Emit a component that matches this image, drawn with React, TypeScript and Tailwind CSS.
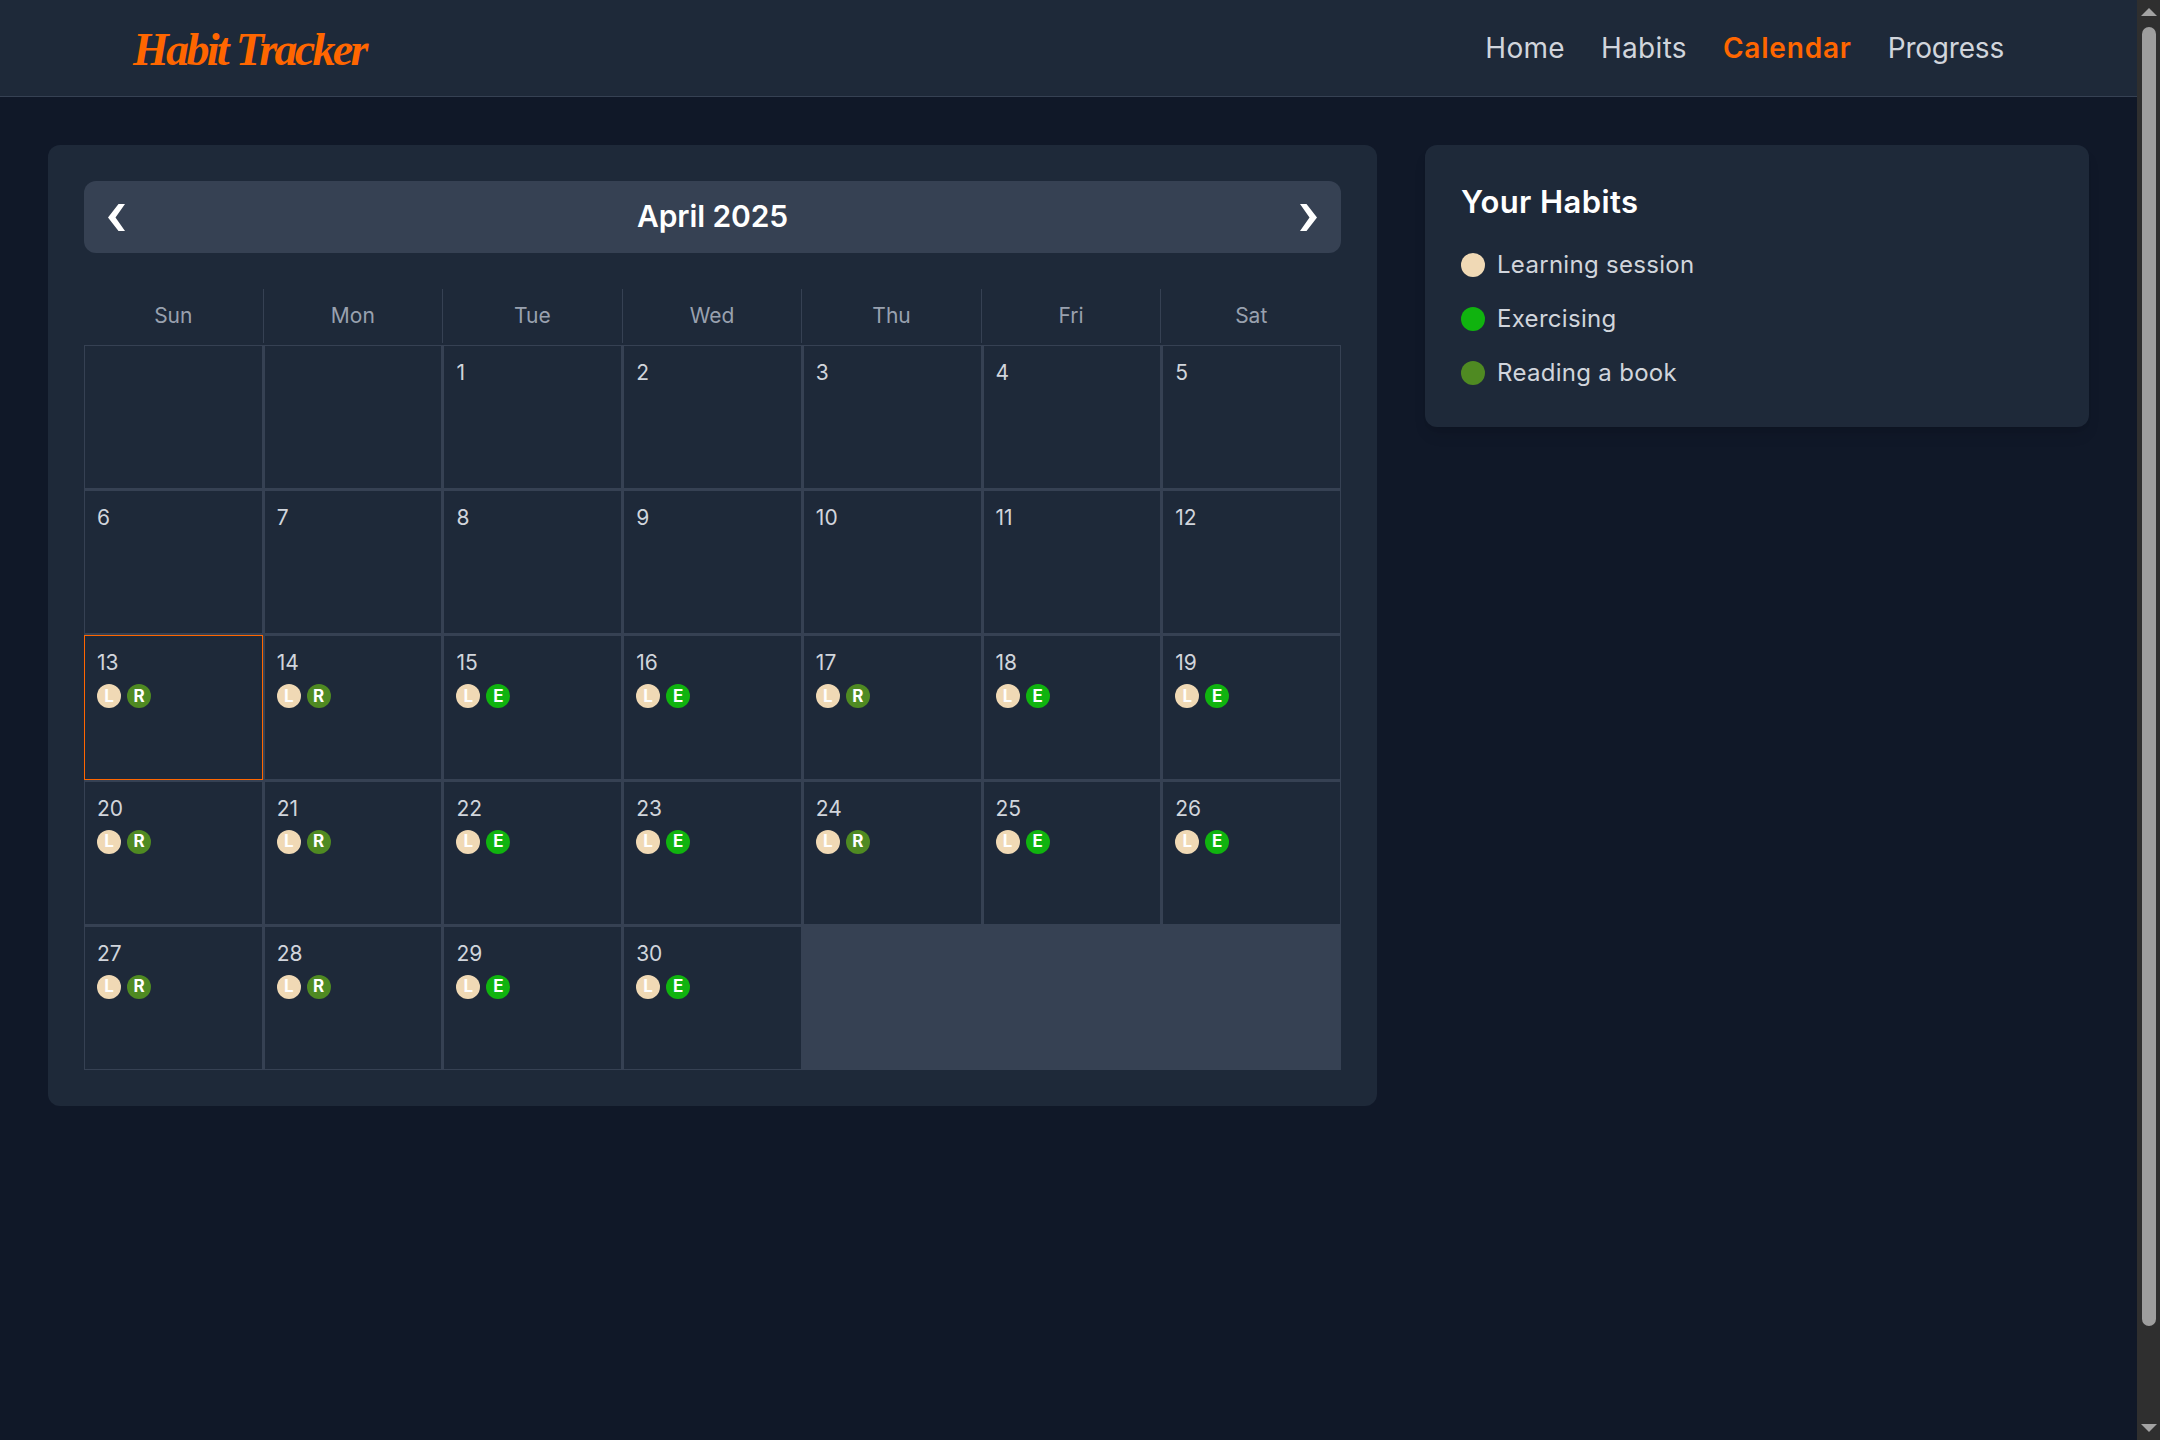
const DAYS = ["Sun", "Mon", "Tue", "Wed", "Thu", "Fri", "Sat"];

const HABITS = [
  { name: "Learning session", color: "bg-[#f0d9b5]" },
  { name: "Exercising", color: "bg-[#10b30f]" },
  { name: "Reading a book", color: "bg-[#4f8a22]" },
];

const BADGE_COLORS: Record<string, string> = {
  L: "bg-[#f0d9b5]",
  E: "bg-[#10b30f]",
  R: "bg-[#4f8a22]",
};

// null means the slot before the 1st of the month
const CELLS: { day: number | null; marks: string[] }[] = [
  { day: null, marks: [] },
  { day: null, marks: [] },
  { day: 1, marks: [] },
  { day: 2, marks: [] },
  { day: 3, marks: [] },
  { day: 4, marks: [] },
  { day: 5, marks: [] },
  { day: 6, marks: [] },
  { day: 7, marks: [] },
  { day: 8, marks: [] },
  { day: 9, marks: [] },
  { day: 10, marks: [] },
  { day: 11, marks: [] },
  { day: 12, marks: [] },
  { day: 13, marks: ["L", "R"] },
  { day: 14, marks: ["L", "R"] },
  { day: 15, marks: ["L", "E"] },
  { day: 16, marks: ["L", "E"] },
  { day: 17, marks: ["L", "R"] },
  { day: 18, marks: ["L", "E"] },
  { day: 19, marks: ["L", "E"] },
  { day: 20, marks: ["L", "R"] },
  { day: 21, marks: ["L", "R"] },
  { day: 22, marks: ["L", "E"] },
  { day: 23, marks: ["L", "E"] },
  { day: 24, marks: ["L", "R"] },
  { day: 25, marks: ["L", "E"] },
  { day: 26, marks: ["L", "E"] },
  { day: 27, marks: ["L", "R"] },
  { day: 28, marks: ["L", "R"] },
  { day: 29, marks: ["L", "E"] },
  { day: 30, marks: ["L", "E"] },
];

function Chevron({ direction }: { direction: "left" | "right" }) {
  return (
    <svg width="17" height="27" viewBox="0 0 17 27" className={direction === "right" ? "-scale-x-100" : ""}>
      <polygon points="10.5,0 17,0 7.5,13.5 17,27 10.5,27 0,13.5" fill="white" />
    </svg>
  );
}

function Header() {
  return (
    <header className="flex h-[97px] shrink-0 items-center justify-between border-b border-gray-700 bg-gray-800 px-[133px]">
      <div className="mt-[3px] font-['Liberation_Serif',serif] text-[46px] font-bold italic leading-none tracking-[-2.7px] text-[#ff6600]">
        Habit Tracker
      </div>
      <nav className="flex items-center gap-9 text-[28px] tracking-[0.3px] text-gray-300">
        <a>Home</a>
        <a>Habits</a>
        <a className="font-semibold tracking-[0.8px] text-[#ff6600]">Calendar</a>
        <a className="tracking-[-0.2px]">Progress</a>
      </nav>
    </header>
  );
}

function Calendar() {
  return (
    <section className="w-[1329px] rounded-xl bg-gray-800 p-9">
      <div className="flex h-[72px] items-center justify-between rounded-xl bg-gray-700 px-6 text-white">
        <Chevron direction="left" />
        <h2 className="pb-[2px] text-[30px] font-semibold tracking-[-0.1px]">April 2025</h2>
        <Chevron direction="right" />
      </div>

      <div className="mt-9 grid grid-cols-7">
        {DAYS.map((day, i) => (
          <div
            key={day}
            className={`mb-[2px] flex h-[54px] items-center justify-center text-[21px] text-gray-400 ${
              i < 6 ? "border-r border-gray-700" : ""
            }`}
          >
            {day}
          </div>
        ))}
      </div>

      <div className="grid grid-cols-7 gap-[3px] bg-gray-700 p-px">
        {CELLS.map((cell, i) => (
          <div
            key={i}
            className={`h-[142.2px] bg-gray-800 px-3 pt-3 ${
              cell.day === 13 ? "outline outline-1 outline-[#ff6600]" : ""
            }`}
          >
            {cell.day !== null && (
              <div className="text-[21px] leading-[30px] text-gray-300">{cell.day}</div>
            )}
            {cell.marks.length > 0 && (
              <div className="mt-[6px] flex gap-[6px]">
                {cell.marks.map((mark) => (
                  <span
                    key={mark}
                    className={`flex size-6 items-center justify-center rounded-full text-[17px] font-bold text-white ${BADGE_COLORS[mark]}`}
                  >
                    {mark}
                  </span>
                ))}
              </div>
            )}
          </div>
        ))}
      </div>
    </section>
  );
}

function HabitList() {
  return (
    <aside className="h-[282px] flex-1 rounded-xl bg-gray-800 p-9 shadow-lg">
      <h3 className="mb-6 text-[31px] font-semibold leading-[42px] tracking-[0.4px] text-white">
        Your Habits
      </h3>
      <ul className="flex flex-col gap-[18px]">
        {HABITS.map((habit) => (
          <li key={habit.name} className="flex h-9 items-center gap-3 text-[24px] tracking-[0.3px] text-gray-300">
            <span className={`size-6 rounded-full ${habit.color}`} />
            {habit.name}
          </li>
        ))}
      </ul>
    </aside>
  );
}

function ScrollBar() {
  return (
    <div className="flex h-full w-[23px] shrink-0 flex-col items-center bg-[#2f2f2f]">
      <div className="mt-2 size-0 border-x-[8px] border-b-[8px] border-x-transparent border-b-[#a3a3a3]" />
      <div className="mt-[11px] h-[1299px] w-[14px] rounded-full bg-[#9e9e9e]" />
      <div className="mt-auto mb-2 size-0 border-x-[8px] border-t-[8px] border-x-transparent border-t-[#a3a3a3]" />
    </div>
  );
}

export default function App() {
  return (
    <div className="flex h-screen overflow-hidden bg-gray-900 font-['Inter',sans-serif]">
      <div className="flex min-w-0 flex-1 flex-col">
        <Header />
        <main className="flex items-start gap-12 px-12 pt-12">
          <Calendar />
          <HabitList />
        </main>
      </div>
      <ScrollBar />
    </div>
  );
}
